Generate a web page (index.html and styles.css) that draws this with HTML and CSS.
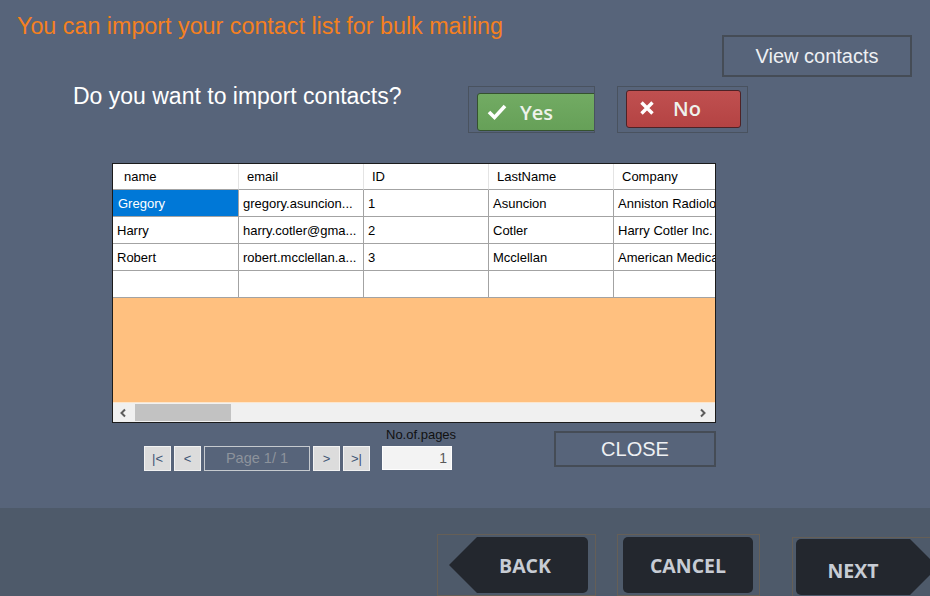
FILE: index.html
```html
<!DOCTYPE html>
<html lang="en">
  <head>
    <meta charset="UTF-8" />
    <title>Import contacts</title>
    <link rel="stylesheet" href="styles.css">
  </head>
  <body>
    <div class="screen">
      <div class="panel">
        <div class="top-row">
          <h1 class="title">You can import your contact list for bulk mailing</h1>
          <button class="outline-button view-button">View contacts</button>
        </div>

        <div class="ask-row">
          <p class="question">Do you want to import contacts?</p>
          <div class="choice-frame yes-frame">
            <button class="choice yes">
              <svg width="20" height="18" viewBox="0 0 20 18">
                <polyline points="2,9 7.5,14.5 18,3" fill="none" stroke="#fff" stroke-width="3.6" />
              </svg>
              Yes
            </button>
          </div>
          <div class="choice-frame no-frame">
            <button class="choice no">
              <svg width="16" height="16" viewBox="0 0 16 16">
                <path d="M2.5 2.5 L13.5 13.5 M13.5 2.5 L2.5 13.5" stroke="#fff" stroke-width="3.4" />
              </svg>
              No
            </button>
          </div>
        </div>

        <!-- contacts grid -->
        <div class="grid">
          <div class="grid-clip">
            <table class="contacts">
              <thead>
                <tr>
                  <th class="first">name</th>
                  <th>email</th>
                  <th>ID</th>
                  <th>LastName</th>
                  <th>Company</th>
                </tr>
              </thead>
              <tbody>
                <tr>
                  <td class="selected">Gregory</td>
                  <td>gregory.asuncion...</td>
                  <td>1</td>
                  <td>Asuncion</td>
                  <td>Anniston Radiology</td>
                </tr>
                <tr>
                  <td>Harry</td>
                  <td>harry.cotler@gma...</td>
                  <td>2</td>
                  <td>Cotler</td>
                  <td>Harry Cotler Inc.</td>
                </tr>
                <tr>
                  <td>Robert</td>
                  <td>robert.mcclellan.a...</td>
                  <td>3</td>
                  <td>Mcclellan</td>
                  <td>American Medical</td>
                </tr>
                <tr>
                  <td></td>
                  <td></td>
                  <td></td>
                  <td></td>
                  <td></td>
                </tr>
              </tbody>
            </table>
          </div>
          <div class="grid-empty"></div>
          <div class="hscroll">
            <svg class="arrow" width="8" height="10" viewBox="0 0 8 10">
              <polyline points="6,1.5 2.5,5 6,8.5" fill="none" stroke="#5c5c5c" stroke-width="2" />
            </svg>
            <div class="thumb"></div>
            <svg class="arrow right" width="8" height="10" viewBox="0 0 8 10">
              <polyline points="2,1.5 5.5,5 2,8.5" fill="none" stroke="#5c5c5c" stroke-width="2" />
            </svg>
          </div>
        </div>

        <div class="pager-row">
          <div class="pager">
            <button class="page-btn">|&lt;</button>
            <button class="page-btn">&lt;</button>
            <div class="page-box">Page 1/ 1</div>
            <button class="page-btn">&gt;</button>
            <button class="page-btn">&gt;|</button>
          </div>
          <div class="pages">
            <label class="pages-label">No.of.pages</label>
            <div class="pages-input">1</div>
          </div>
          <button class="outline-button close-button">CLOSE</button>
        </div>
      </div>

      <div class="footer">
        <div class="nav-frame back-frame">
          <button class="nav back">BACK</button>
        </div>
        <div class="nav-frame cancel-frame">
          <button class="nav cancel">CANCEL</button>
        </div>
        <div class="nav-frame next-frame">
          <button class="nav next">NEXT</button>
        </div>
      </div>
    </div>
  </body>
</html>
```

FILE: styles.css
```css
body {
  margin: 0;
  font-family: 'Liberation Sans', Arial, sans-serif;
  background: #4e5a6a;
  overflow: hidden;
}

button {
  font-family: inherit;
  cursor: pointer;
}

.screen {
  width: 930px;
  height: 596px;
  overflow: hidden;
}

.panel {
  height: 508px;
  background: #57647a;
}

/* header + question */

.top-row {
  display: flex;
  justify-content: space-between;
  align-items: flex-start;
}

.title {
  margin: 13px 0 0 17px;
  font-size: 23.3px;
  line-height: 26px;
  font-weight: normal;
  color: #f5801f;
}

.outline-button {
  background: transparent;
  border: 2px solid #454c56;
  color: #eef0f3;
  font-size: 20px;
  padding: 0;
}

.view-button {
  margin: 35px 18px 0 0;
  width: 190px;
  height: 42px;
}

.ask-row {
  display: flex;
  align-items: flex-start;
  margin-top: 9px;
  padding-left: 73px;
}

.question {
  margin: 0;
  width: 395px;
  font-size: 23px;
  line-height: 20px;
  color: #fff;
}

.choice-frame {
  border: 1px solid #49525f;
  box-sizing: border-box;
  height: 47px;
}

.yes-frame {
  width: 127px;
  padding: 6px 0 0 8px;
  overflow: hidden;
}

.no-frame {
  width: 131px;
  margin-left: 22px;
  padding: 3px 0 0 8px;
}

.choice {
  display: flex;
  align-items: center;
  height: 38px;
  border-radius: 3px;
  font-family: 'Open Sans', sans-serif;
  font-weight: 600;
  font-size: 20px;
  color: #eef2ec;
  box-sizing: border-box;
}

.yes {
  width: 122px;
  padding: 0 0 0 9px;
  gap: 13px;
  background: linear-gradient(#72ab63, #66a058);
  border: 1px solid #35522f;
}

.no {
  width: 115px;
  padding: 0 0 2px 12px;
  gap: 18px;
  background: linear-gradient(#c05050, #b44343);
  border: 1px solid #4e2226;
}

/* grid */

.grid {
  margin: 30px 0 0 112px;
  width: 602px;
  height: 258px;
  border: 1px solid #1b1b1b;
  background: #fff;
  display: flex;
  flex-direction: column;
}

.grid-clip {
  overflow: hidden;
}

.contacts {
  table-layout: fixed;
  width: 626px;
  border-collapse: separate;
  border-spacing: 0;
  font-size: 13px;
  color: #000;
}

.contacts th,
.contacts td {
  width: 125px;
  box-sizing: border-box;
  text-align: left;
  white-space: nowrap;
  overflow: hidden;
  padding: 0 0 0 4px;
  border-right: 1px solid #a3a3a3;
  border-bottom: 1px solid #a3a3a3;
}

.contacts th {
  height: 26px;
  padding-left: 8px;
  font-weight: normal;
  border-right-color: #e4e4e4;
}

.contacts th.first {
  width: 126px;
  padding-left: 11px;
}

.contacts td {
  height: 27px;
}

.contacts td.selected {
  background: #0078d7;
  color: #fff;
  padding-left: 5px;
}

.grid-empty {
  flex: 1;
  background: #ffc07f;
}

.hscroll {
  height: 20px;
  border-top: 1px solid #fde6cc;
  background: #f0f0f0;
  display: flex;
  align-items: center;
  box-sizing: border-box;
  padding: 0 8px 0 6px;
}

.thumb {
  width: 96px;
  height: 17px;
  margin-left: 8px;
  background: #c2c2c2;
}

.arrow.right {
  margin-left: auto;
}

/* pager */

.pager-row {
  display: flex;
  align-items: flex-start;
  padding-left: 144px;
}

.pager {
  display: flex;
  gap: 3px;
  margin-top: 23px;
}

.page-btn {
  width: 27px;
  height: 25px;
  padding: 0;
  border: 1px solid #f2f2f2;
  background: #dcdcdc;
  color: #3e5574;
  font-size: 13px;
}

.page-box {
  width: 106px;
  height: 25px;
  box-sizing: border-box;
  border: 1px solid #c6cacf;
  color: #8d939c;
  font-size: 14.5px;
  line-height: 23px;
  text-align: center;
}

.pages {
  width: 70px;
  margin: 4px 0 0 12px;
  display: flex;
  flex-direction: column;
}

.pages-label {
  font-size: 13px;
  line-height: 15px;
  padding-left: 4px;
  color: #111;
  white-space: nowrap;
}

.pages-input {
  margin-top: 4px;
  width: 70px;
  height: 24px;
  box-sizing: border-box;
  border: 1px solid #fdfdfd;
  background: #f3f3f3;
  color: #5a5a5a;
  font-size: 14px;
  line-height: 22px;
  text-align: right;
  padding-right: 4px;
}

.close-button {
  margin: 8px 0 0 102px;
  width: 162px;
  height: 36px;
}

/* footer navigation */

.footer {
  height: 88px;
  box-sizing: border-box;
  padding: 26px 0 0 437px;
  display: flex;
  align-items: flex-start;
  background: #4e5a6a;
}

.nav-frame {
  flex-shrink: 0;
  height: 62px;
  box-sizing: border-box;
  border: 1px solid #655f57;
  padding-top: 2px;
}

.back-frame {
  width: 159px;
  padding-left: 11px;
}

.cancel-frame {
  width: 143px;
  margin-left: 21px;
  padding-left: 5px;
}

.next-frame {
  width: 160px;
  margin: 3px 0 0 32px;
  padding: 1px 0 0 3px;
}

.nav {
  height: 56px;
  border: none;
  background: #23272e;
  color: #c7ccd4;
  font-family: 'Open Sans', sans-serif;
  font-weight: 700;
  font-size: 19.5px;
  padding: 0;
}

.back {
  width: 139px;
  padding-left: 13px;
  border-radius: 0 5px 5px 0;
  clip-path: polygon(28px 0, 100% 0, 100% 100%, 28px 100%, 0 50%);
}

.cancel {
  width: 130px;
  border-radius: 5px;
}

.next {
  width: 142px;
  padding: 6px 28px 0 0;
  border-radius: 5px 0 0 5px;
  clip-path: polygon(0 0, calc(100% - 28px) 0, 100% 50%, calc(100% - 28px) 100%, 0 100%);
}
```
